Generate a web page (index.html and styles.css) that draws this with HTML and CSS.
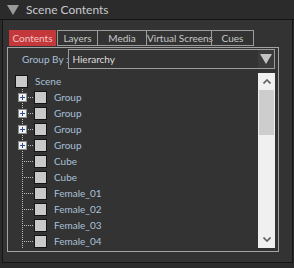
FILE: index.html
```html
<!DOCTYPE html>
<html lang="en">
<head>
  <meta charset="UTF-8">
  <title>Scene Contents</title>
  <link rel="stylesheet" href="styles.css">
</head>
<body>
  <div class="titulo">
    <svg class="seta" width="12" height="10" viewBox="0 0 12 10"><polygon points="0,0 12,0 6,10" fill="#9a9a9a"/></svg>
    <span>Scene Contents</span>
  </div>

  <div class="painel">
    <div class="abas">
      <div class="aba ativa contents">Contents</div>
      <div class="aba layers">Layers</div>
      <div class="aba media">Media</div>
      <div class="aba virtual">Virtual Screens</div>
      <div class="aba cues">Cues</div>
    </div>

    <div class="caixa">
      <div class="grupo">
        <span class="rotulo">Group By :</span>
        <div class="seletor">
          <span class="valor">Hierarchy</span>
          <div class="botao-seta">
            <svg width="12" height="10" viewBox="0 0 12 10"><polygon points="0,0 12,0 6,10" fill="#c4c4c4"/></svg>
          </div>
        </div>
      </div>

      <div class="lista">
        <div class="arvore">
          <div class="item raiz"><span class="check"></span><span class="nome">Scene</span></div>
          <div class="item"><span class="galho"><span class="mais"></span></span><span class="check"></span><span class="nome">Group</span></div>
          <div class="item"><span class="galho"><span class="mais"></span></span><span class="check"></span><span class="nome">Group</span></div>
          <div class="item"><span class="galho"><span class="mais"></span></span><span class="check"></span><span class="nome">Group</span></div>
          <div class="item"><span class="galho"><span class="mais"></span></span><span class="check"></span><span class="nome">Group</span></div>
          <div class="item"><span class="galho"></span><span class="check"></span><span class="nome">Cube</span></div>
          <div class="item"><span class="galho"></span><span class="check"></span><span class="nome">Cube</span></div>
          <div class="item"><span class="galho"></span><span class="check"></span><span class="nome">Female_01</span></div>
          <div class="item"><span class="galho"></span><span class="check"></span><span class="nome">Female_02</span></div>
          <div class="item"><span class="galho"></span><span class="check"></span><span class="nome">Female_03</span></div>
          <div class="item"><span class="galho"></span><span class="check"></span><span class="nome">Female_04</span></div>
        </div>

        <div class="rolagem">
          <div class="rol-btn">
            <svg width="8" height="5" viewBox="0 0 8 5"><polyline points="0.5,4.5 4,1 7.5,4.5" fill="none" stroke="#5f5f5f" stroke-width="1.6"/></svg>
          </div>
          <div class="polegar"></div>
          <div class="trilho"></div>
          <div class="rol-btn">
            <svg width="8" height="5" viewBox="0 0 8 5"><polyline points="0.5,0.5 4,4 7.5,0.5" fill="none" stroke="#5f5f5f" stroke-width="1.6"/></svg>
          </div>
        </div>
      </div>
    </div>
  </div>
</body>
</html>
```

FILE: styles.css
```css
* {
  box-sizing: border-box;
}

body {
  margin: 0;
  width: 294px;
  height: 268px;
  overflow: hidden;
  background-color: #2b2b2b;
  font-family: Lato, "Open Sans", sans-serif;
  font-size: 10px;
}

.titulo {
  height: 20px;
  display: flex;
  align-items: center;
  padding-left: 7px;
  color: #c9c9cf;
  font-size: 12px;
  border-bottom: 1px solid #141414;
}

.titulo .seta {
  margin-right: 7px;
}

.painel {
  margin: 0 1px 0 2px;
  height: 243px;
  background-color: #333333;
  border: 1px solid #151515;
  border-top: none;
  padding: 10px 13px 0 4px;
}

/* abas */
.abas {
  display: flex;
  padding-left: 2px;
  height: 16px;
}

.aba {
  border: 1px solid #9c9c9c;
  color: #c8c8c8;
  line-height: 14px;
  text-align: center;
  margin-left: -1px;
  white-space: nowrap;
}

.aba.ativa {
  background-color: #c4373b;
  border-color: #c4373b;
  color: #f3c4c4;
  margin-left: 0;
  margin-right: 2px;
}

.contents { width: 47px; }
.layers { width: 41px; }
.media { width: 50px; }
.virtual { width: 66px; }
.cues { width: 43px; }

/* caixa principal */
.caixa {
  margin-top: 1px;
  height: 205px;
  border: 1px solid #a4a4a4;
  padding: 1px 3px 3px 0;
  display: flex;
  flex-direction: column;
}

.grupo {
  display: flex;
  align-items: center;
  height: 20px;
}

.rotulo {
  color: #a9c0d8;
  flex: 0 0 42px;
  margin-left: 14px;
  white-space: nowrap;
}

.seletor {
  flex: 1;
  height: 20px;
  border: 1px solid #9c9c9c;
  display: flex;
  align-items: center;
}

.valor {
  flex: 1;
  color: #dedede;
  padding-left: 3px;
}

.botao-seta {
  width: 16px;
  height: 18px;
  background-color: #3b3b3b;
  display: flex;
  align-items: center;
  justify-content: center;
}

/* lista em árvore */
.lista {
  margin-top: 4px;
  flex: 1;
  display: flex;
  overflow: hidden;
}

.arvore {
  flex: 1;
  padding-left: 7px;
  overflow: hidden;
}

.item {
  height: 16px;
  display: flex;
  align-items: center;
  color: #a9c0d8;
  white-space: nowrap;
}

.raiz {
  background-image: repeating-linear-gradient(to bottom, #bdbdbd 0 1px, transparent 1px 2px);
  background-size: 1px 2px;
  background-position: 7px 14px;
  background-repeat: no-repeat;
}

.galho {
  width: 19px;
  height: 16px;
  display: flex;
  align-items: center;
  background-image:
    repeating-linear-gradient(to bottom, #bdbdbd 0 1px, transparent 1px 2px),
    repeating-linear-gradient(to right, #bdbdbd 0 1px, transparent 1px 2px);
  background-size: 1px 16px, 12px 1px;
  background-position: 7px 0, 7px 8px;
  background-repeat: no-repeat;
}

.mais {
  width: 9px;
  height: 9px;
  margin-left: 3px;
  border: 1px solid #8c8c8c;
  background-color: #f2f2f2;
  background-image:
    linear-gradient(#2b4f9c, #2b4f9c),
    linear-gradient(#2b4f9c, #2b4f9c);
  background-size: 5px 1px, 1px 5px;
  background-position: 1px 3px, 3px 1px;
  background-repeat: no-repeat;
}

.check {
  width: 13px;
  height: 13px;
  border: 1px solid #141414;
  background-color: #c9c9c9;
}

.nome {
  margin-left: 7px;
}

/* barra de rolagem */
.rolagem {
  width: 17px;
  background-color: #f0f0f0;
  display: flex;
  flex-direction: column;
}

.rol-btn {
  height: 17px;
  display: flex;
  align-items: center;
  justify-content: center;
}

.polegar {
  height: 45px;
  margin: 0 1px;
  background-color: #cdcdcd;
}

.trilho {
  flex: 1;
}
```
